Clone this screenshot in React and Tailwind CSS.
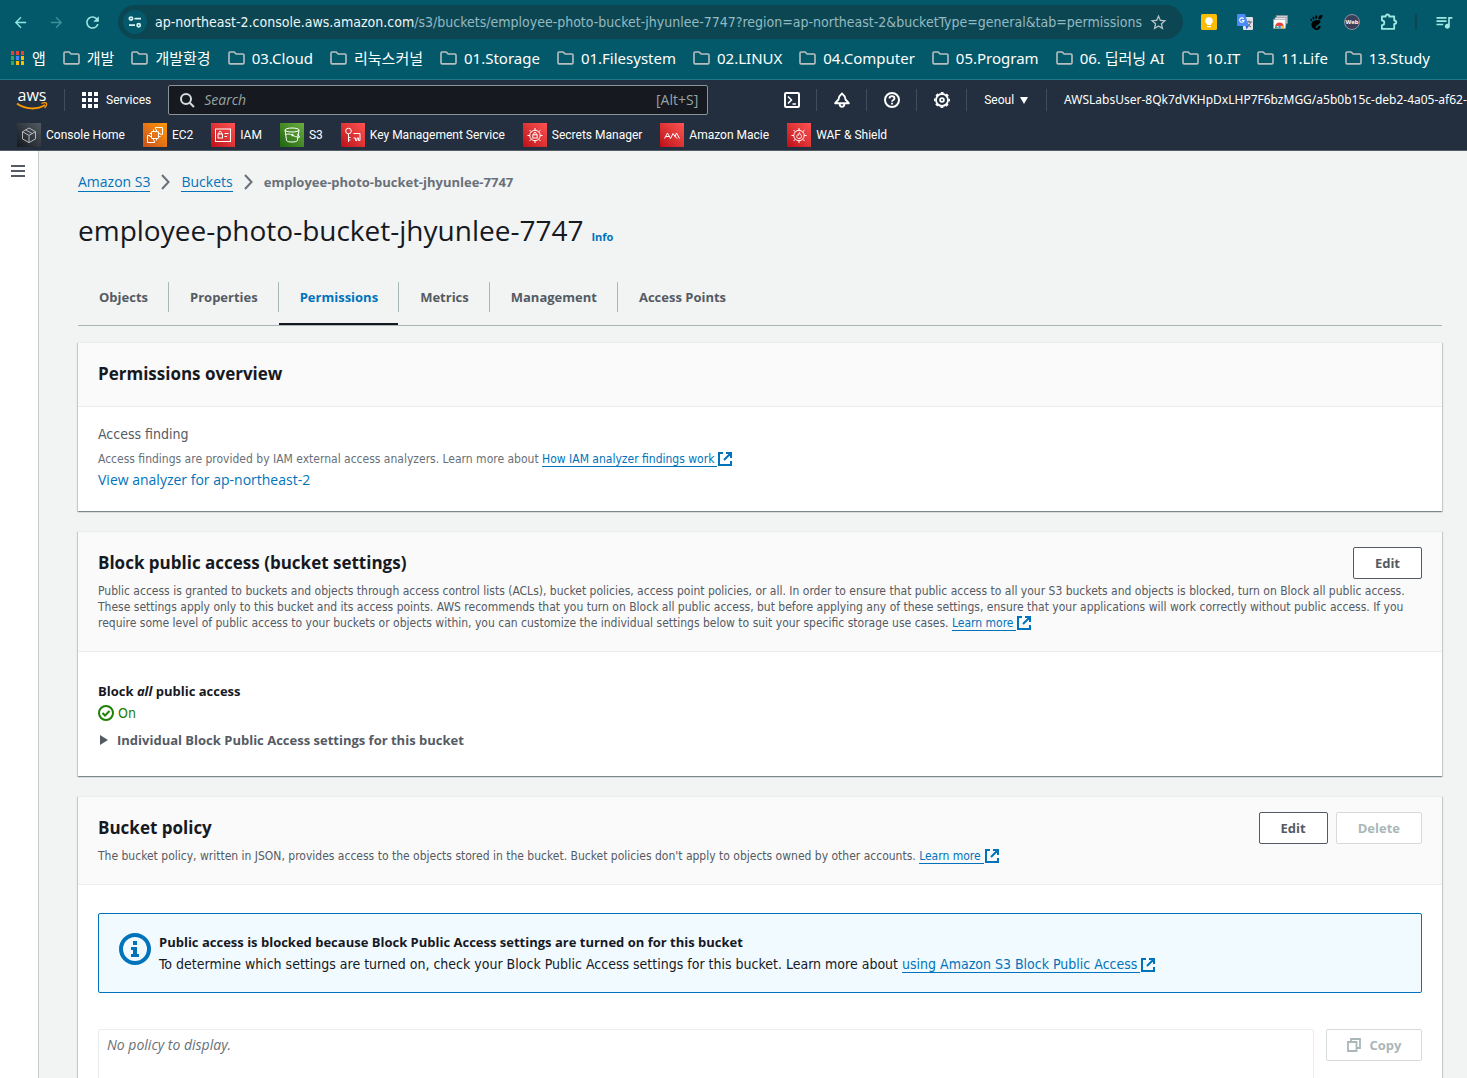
import React from 'react';
import { MdArrowBack, MdArrowForward, MdRefresh, MdStarOutline, MdQueueMusic } from 'react-icons/md';
import { SiGnome } from 'react-icons/si';

const sans = "font-['DejaVu_Sans_Condensed','Noto_Sans_CJK_KR',sans-serif]";
const navSans = "font-['Roboto',sans-serif]";
const wide = "font-['Open_Sans','Noto_Sans',sans-serif]";
const bold = "font-['Open_Sans','Noto_Sans',sans-serif] font-bold";

/* ---------- browser chrome ---------- */

const bookmarks = [
  '개발', '개발환경', '03.Cloud', '리눅스커널', '01.Storage', '01.Filesystem', '02.LINUX',
  '04.Computer', '05.Program', '06. 딥러닝 AI', '10.IT', '11.Life', '13.Study',
];

function FolderIcon() {
  return (
    <svg width="17" height="14" viewBox="0 0 17 14" className="shrink-0" fill="none" stroke="#b9bfc1" strokeWidth="1.6" strokeLinejoin="round">
      <path d="M1 2.2c0-.7.4-1.2 1.1-1.2h4.1l1.9 2h6.7c.7 0 1.2.5 1.2 1.2v7.5c0 .7-.5 1.2-1.2 1.2H2.1c-.7 0-1.1-.5-1.1-1.2z" />
    </svg>
  );
}

function AppsIcon() {
  const colors = ['#ea4335', '#ea4335', '#ea4335', '#34a853', '#4285f4', '#fbbc04', '#34a853', '#fbbc04', '#fbbc04'];
  return (
    <svg width="13" height="14" viewBox="0 0 13 14" className="shrink-0">
      {colors.map((c, i) => (
        <rect key={i} x={(i % 3) * 5} y={Math.floor(i / 3) * 5} width="3" height="4" fill={c} />
      ))}
    </svg>
  );
}

function TuneIcon() {
  return (
    <svg width="14" height="12" viewBox="0 0 14 12" fill="none" stroke="#d9f3f3" strokeWidth="1.7">
      <circle cx="3" cy="2.6" r="1.6" />
      <path d="M6.5 2.6h6.5M1 9.2h6" />
      <circle cx="10.7" cy="9.2" r="1.6" />
    </svg>
  );
}

function KeepIcon() {
  return (
    <svg width="16" height="16" viewBox="0 0 16 16">
      <rect width="16" height="16" rx="1.5" fill="#fbbc04" />
      <path d="M8 3a3.8 3.8 0 0 0-2 7v1h4v-1a3.8 3.8 0 0 0-2-7zM6 12h4v1.2H6z" fill="#fff" />
    </svg>
  );
}

function TranslateIcon() {
  return (
    <svg width="16" height="16" viewBox="0 0 16 16">
      <rect x="6" y="3" width="10" height="13" rx="1" fill="#dfe1e5" />
      <path d="M9 8h6M12 6.5V8M10 13c2-1 3-3 3.5-5M10.5 9.5c.8 1.6 2 2.7 3.5 3.5" stroke="#5f6368" strokeWidth="1" fill="none" />
      <path d="M1 0h7l3.8 12H1a1 1 0 0 1-1-1V1a1 1 0 0 1 1-1z" fill="#4c8bf5" />
      <path d="M8.5 12h3.3L9.5 15.5z" fill="#3367d6" />
      <path d="M6.6 4.7A2.2 2.2 0 1 0 7 6.5H4.9" fill="none" stroke="#fff" strokeWidth="1.1" />
    </svg>
  );
}

function CardsIcon() {
  return (
    <svg width="16" height="14" viewBox="0 0 16 14">
      <rect x="3.5" y=".5" width="11" height="8" fill="#c9ccd0" stroke="#8d9194" strokeWidth=".6" />
      <rect x="2" y="2.5" width="11" height="8" fill="#e1e3e6" stroke="#8d9194" strokeWidth=".6" />
      <rect x=".5" y="4.5" width="12" height="9" fill="#fff" stroke="#9a9da0" strokeWidth=".6" />
      <path d="M2.2 11a4.4 4.4 0 0 1 8.6 0z" fill="#ea4335" />
      <path d="M2 13.2c0-1.2.2-1.9.8-2.9L5.5 13.2z" fill="#34a853" />
      <path d="M7.5 13.2l2-2.7h1.2c.4.9.5 1.7.5 2.7z" fill="#fbbc04" />
      <circle cx="6.6" cy="11.9" r="1.4" fill="#4285f4" />
    </svg>
  );
}

function WebIcon() {
  return (
    <span className="flex size-4 items-center justify-center rounded-full border border-[#8d93a8] bg-[#3b3f58] text-[6px] font-bold leading-none text-white">
      Web
    </span>
  );
}

function PuzzleIcon() {
  return (
    <svg width="18" height="18" viewBox="0 0 18 18" fill="none" stroke="#9fe8e2" strokeWidth="1.8" strokeLinejoin="round">
      <path d="M1.9 3.5h3.8c0-2.7 3.6-2.7 3.6 0h4.9v4c2.7 0 2.7 3.4 0 3.4v5H1.9v-3.7c3.2 0 3.2-4.8 0-4.8z" />
    </svg>
  );
}

function BrowserBar() {
  return (
    <div className="shrink-0 border-b border-[#1f7888] bg-[#03596a] font-['Noto_Sans','Noto_Sans_CJK_KR',sans-serif]">
      <div className="flex h-11 items-center pl-3 pr-[13px]">
        <button aria-label="Back" className="text-[#8fe6e4]"><MdArrowBack size={17} /></button>
        <button aria-label="Forward" className="ml-[19px] text-[#3d8f99]"><MdArrowForward size={17} /></button>
        <button aria-label="Reload" className="ml-[18px] text-[#9fe8e2]"><MdRefresh size={19} /></button>
        <div className="ml-4 flex h-[34px] min-w-0 flex-1 items-center rounded-full bg-[#0d4653] pl-[5px] pr-[15px]">
          <button aria-label="Site information" className="flex size-6 shrink-0 items-center justify-center rounded-full bg-[#03596a]">
            <TuneIcon />
          </button>
          <p className="ml-2 flex-1 whitespace-nowrap font-['DejaVu_Sans_Condensed',sans-serif] text-sm text-[#93bac0]">
            <span className="text-[#eef6f7]">ap-northeast-2.console.aws.amazon.com</span>
            /s3/buckets/employee-photo-bucket-jhyunlee-7747?region=ap-northeast-2&amp;bucketType=general&amp;tab=permissions
          </p>
          <button aria-label="Bookmark" className="text-[#b9c4c6]"><MdStarOutline size={19} /></button>
        </div>
        <div className="ml-[18px] flex items-center gap-5">
          <KeepIcon />
          <TranslateIcon />
          <CardsIcon />
          <SiGnome size={15} color="#000" />
          <WebIcon />
          <PuzzleIcon />
        </div>
        <div className="ml-[17px] h-4 w-0.5 bg-[#0d4653]" />
        <button aria-label="Media" className="ml-[17px] text-[#9fe8e2]"><MdQueueMusic size={20} /></button>
      </div>
      <nav className="flex h-[35px] items-start gap-[17px] whitespace-nowrap pl-[11px] pt-[3px] text-[15px] leading-[22px] text-white">
        <a href="#apps" className="flex items-center gap-2"><AppsIcon />앱</a>
        {bookmarks.map((b) => (
          <a key={b} href="#bookmark" className="flex items-center gap-[7px]"><FolderIcon />{b}</a>
        ))}
      </nav>
    </div>
  );
}

/* ---------- console navigation ---------- */

const burst = 'M12 5v2.3M12 17.7V20M4.5 12.5h2.3M17.2 12.5h2.3M6.5 7l1.8 1.8M17.5 7l-1.8 1.8M6.5 18l1.8-1.8M17.5 18l-1.8-1.8';

const art = {
  home: (<><path d="M12 5l6.5 3.7v7.2L12 19.600l-6.500-3.700V8.700z" /><path d="M5.500 8.700L12 12.400l6.500-3.700M12 12.400v7.200M8.700 6.900l6.500 3.700" /></>),
  ec2: (<><path d="M12.500 6.500v-2h7v7h-2M7 12.500H4.500v7h7v-2" /><rect x="8.500" y="8.500" width="7" height="7" rx=".5" /><path d="M10.500 6.500v2M13.500 6.500v2M10.500 15.500v2M13.500 15.500v2M6.500 10.500h2M6.500 13.500h2M15.500 10.500h2M15.500 13.500h2" /></>),
  iam: (<><rect x="4.500" y="6" width="15" height="12.500" /><rect x="7" y="11" width="4.500" height="4" /><path d="M8 11V9.500a1.200 1.200 0 0 1 2.400 0V11M13.500 10.500h4M13.500 13.500h2.500" /></>),
  s3: (<><ellipse cx="12" cy="7" rx="7" ry="2" /><path d="M5 7l1.600 10.500c.5 2 10.300 2 10.800 0L19 7M6 11.500c2-1 4-.5 6 .5s5 2.500 7.500 2.200c.5-1-1-2-2.500-2.700" /><circle cx="12.500" cy="12" r=".8" /></>),
  kms: (<><circle cx="7.500" cy="8" r="2.800" /><path d="M7.500 11v8M7.500 14.500H9.500M7.500 17H9.500M12.500 10.500H19v7h-1.500v-2.500h-1.500v2.500h-1.500v-2.500h-2" /></>),
  secrets: (<><circle cx="12" cy="12.500" r="5.200" /><rect x="9.800" y="11.800" width="4.400" height="3.200" /><path d="M10.700 11.800v-1a1.300 1.300 0 0 1 2.600 0v1" /><path d={burst} /></>),
  macie: (<path d="M4.500 15.500l3-5.500 3 5.500 2.500-5 2 3 1.500-3.500 3 5.500M6 13.500h3M14 12l3 3.500" />),
  waf: (<><circle cx="12" cy="12.500" r="5.200" /><path d="M12 15.500c-2.500 0-2.800-2.500-1.200-4 .3 1 .8 1 1 .5.200-1-.3-1.700.7-2.500 0 1.500 2 2 2 4 0 1.300-1 2-2.500 2z" /><path d={burst} /></>),
};

const red = 'from-[#bd0816] to-[#ff5252] text-white';
const favorites = [
  ['Console Home', 'home', 'from-[#16191f] to-[#545b64] text-[#b5babf]'],
  ['EC2', 'ec2', 'from-[#c8511b] to-[#ff9900] text-white'],
  ['IAM', 'iam', red],
  ['S3', 's3', 'from-[#1b660f] to-[#6cae3e] text-white'],
  ['Key Management Service', 'kms', red],
  ['Secrets Manager', 'secrets', red],
  ['Amazon Macie', 'macie', red],
  ['WAF & Shield', 'waf', red],
];

function Divider() {
  return <div className="h-[22px] w-px shrink-0 bg-[#414d5c]" />;
}

function NavIcon({ label, children }) {
  return (
    <button aria-label={label} className="flex w-[49px] shrink-0 justify-center">
      <svg width="16" height="16" viewBox="0 0 16 16" fill="none" stroke="#fff" strokeWidth="2" strokeLinejoin="round">{children}</svg>
    </button>
  );
}

function ConsoleNav() {
  return (
    <header className={`shrink-0 border-b border-[#545b64] bg-[#232f3e] text-xs text-white ${navSans}`}>
      <div className="flex h-10 items-center overflow-hidden whitespace-nowrap pl-4">
        <a href="#home" aria-label="AWS home" className="flex w-8 shrink-0 flex-col items-center">
          <span className={`h-3 text-base font-medium leading-[11px] ${wide}`}>aws</span>
          <svg width="32" height="8" viewBox="0 0 32 8" fill="none" stroke="#ff9900">
            <path d="M1 1.5C9 7.5 21 8 29 3" strokeWidth="2" />
            <path d="M25.5 1.3c2-.6 4.6-.8 5 .1.3.9-.6 3.3-1.9 4.6" strokeWidth="1.3" />
          </svg>
        </a>
        <div className="ml-4"><Divider /></div>
        <button className="ml-[17px] flex items-center gap-2">
          <svg width="16" height="16" viewBox="0 0 16 16" fill="#fff">
            {[0, 6, 12].map((y) => [0, 6, 12].map((x) => <rect key={`${x}-${y}`} x={x} y={y} width="4" height="4" />))}
          </svg>
          Services
        </button>
        <label className="ml-[17px] flex h-[30px] w-[540px] shrink-0 items-center rounded-xs border border-[#879596] bg-[#16191f] pl-[11px] pr-[9px]">
          <svg width="15" height="15" viewBox="0 0 15 15" fill="none" stroke="#d5dbdb" strokeWidth="2">
            <circle cx="6" cy="6" r="5" /><path d="M9.7 9.7l4.3 4.3" />
          </svg>
          <input aria-label="Search" placeholder="Search" className="ml-[9px] min-w-0 flex-1 bg-transparent font-['Open_Sans',sans-serif] text-sm italic outline-none placeholder:text-[#95a5a6]" />
          <span className={`text-sm text-[#95a5a6] ${wide}`}>[Alt+S]</span>
        </label>
        <div className="ml-[59px] flex shrink-0 items-center">
          <NavIcon label="CloudShell">
            <rect x="1" y="1" width="14" height="14" rx="1" /><path d="M4 4.5L7.5 8 4 11.5M8.5 12H12" strokeWidth="1.7" />
          </NavIcon>
          <Divider />
          <NavIcon label="Notifications">
            <path d="M8 1.5C6 3 4.8 5 4.5 7.5L1.2 11.2h13.6L11.5 7.5C11.2 5 10 3 8 1.5zM5.5 11.5C5.8 16 10.2 16 10.5 11.5" strokeWidth="1.9" />
          </NavIcon>
          <Divider />
          <NavIcon label="Help">
            <circle cx="8" cy="8" r="7" />
            <path d="M5.5 6.5c0-3.2 5-3.2 5 0 0 1.6-2.5 1.6-2.5 3.3M8 10.8v1.7" strokeWidth="1.8" />
          </NavIcon>
          <Divider />
          <NavIcon label="Settings">
            <circle cx="8" cy="8" r="6" strokeWidth="1.8" />
            <circle cx="8" cy="8" r="7.2" strokeWidth="1.6" strokeDasharray="2.827 2.827" strokeDashoffset="1.4" />
            <circle cx="8" cy="8" r="1.9" strokeWidth="1.8" />
          </NavIcon>
          <Divider />
        </div>
        <button className="ml-[17px] flex items-center gap-1.5">
          Seoul
          <svg width="8" height="7" viewBox="0 0 8 7"><path d="M0 0h8L4 7z" fill="#fff" /></svg>
        </button>
        <div className="ml-[18px]"><Divider /></div>
        <button className="ml-[17px] font-['Noto_Sans',sans-serif] text-xs">AWSLabsUser-8Qk7dVKHpDxLHP7F6bzMGG/a5b0b15c-deb2-4a05-af62-</button>
      </div>
      <nav className="flex h-[30px] items-center gap-[18px] whitespace-nowrap pl-[17px]">
        {favorites.map(([name, key, colors]) => (
          <a key={name} href="#service" className="flex items-center gap-[5px]">
            <span className={`size-6 bg-linear-to-tr ${colors}`}>
              <svg width="24" height="24" viewBox="0 0 24 24" fill="none" stroke="currentColor" strokeWidth="1">{art[key]}</svg>
            </span>
            {name}
          </a>
        ))}
      </nav>
    </header>
  );
}

/* ---------- page ---------- */

function ExternalIcon() {
  return (
    <svg width="14" height="14" viewBox="0 0 14 14" className="ml-px inline-block align-[-3px]" fill="none" stroke="#0073bb" strokeWidth="2">
      <path d="M5 1H1v12h12V9M8 1h5v5M13 1L6 8" />
    </svg>
  );
}

function ExternalLink({ children }) {
  return (
    <a href="#external" className="whitespace-nowrap text-[#0073bb]">
      <span className="border-b border-[#0073bb] pr-[3px]">{children}</span>
      <ExternalIcon />
    </a>
  );
}

function Button({ children, disabled }) {
  return (
    <button
      disabled={disabled}
      className={`flex h-8 items-center rounded-xs border bg-white px-[21px] text-[13px] ${bold} ${disabled ? 'border-[#d5dbdb] text-[#aab7b8]' : 'border-[#545b64] text-[#545b64]'}`}
    >
      {children}
    </button>
  );
}

function Card({ title, actions, description, children }) {
  return (
    <section className="border-t border-[#eaeded] bg-white shadow-[0_1px_1px_0_rgba(0,28,36,0.3),1px_1px_1px_0_rgba(0,28,36,0.15),-1px_1px_1px_0_rgba(0,28,36,0.15)]">
      <div className="border-b border-[#eaeded] bg-[#fafafa] px-5 pb-4 pt-[15px]">
        <div className="flex h-8 items-center justify-between">
          <h2 className={`text-[17px] leading-8 text-[#16191f] ${bold}`}>{title}</h2>
          <div className="flex gap-2">{actions}</div>
        </div>
        {description && <p className="pb-1 pt-1 text-xs leading-4 text-[#545b64]">{description}</p>}
      </div>
      {children}
    </section>
  );
}

function Chevron() {
  return (
    <svg width="9" height="16" viewBox="0 0 9 16" fill="none" stroke="#687078" strokeWidth="2"><path d="M1 1l6.5 7L1 15" /></svg>
  );
}

const tabs = ['Objects', 'Properties', 'Permissions', 'Metrics', 'Management', 'Access Points'];

export default function App() {
  return (
    <div className={`flex h-screen flex-col overflow-hidden bg-[#f2f3f3] text-sm text-[#16191f] ${sans}`}>
      <BrowserBar />
      <ConsoleNav />
      <div className="flex min-h-0 flex-1">
        <aside className="w-[39px] shrink-0 border-r border-[#c5caca] bg-white pl-[11px] pt-[14px]">
          <button aria-label="Open navigation" className="block">
            <svg width="14" height="12" viewBox="0 0 14 12" stroke="#545b64" strokeWidth="2"><path d="M0 1h14M0 6h14M0 11h14" /></svg>
          </button>
        </aside>
        <main className="min-w-0 flex-1 overflow-hidden pl-[39px] pr-[25px] pt-[21px]">
          <nav aria-label="Breadcrumb" className={`flex h-5 items-center gap-[11px] text-sm leading-[18px] ${wide}`}>
            <a href="#s3" className="border-b border-[#0073bb] text-[#0073bb]">Amazon S3</a>
            <Chevron />
            <a href="#buckets" className="border-b border-[#0073bb] text-[#0073bb]">Buckets</a>
            <Chevron />
            <span className="text-[13px] font-bold text-[#687078]">employee-photo-bucket-jhyunlee-7747</span>
          </nav>
          <h1 className={`mt-5 flex items-baseline gap-2 text-[28px] leading-9 ${wide}`}>
            employee-photo-bucket-jhyunlee-7747
            <a href="#info" className="text-[11px] font-bold text-[#0073bb]">Info</a>
          </h1>
          <div role="tablist" className="mt-[27px] flex border-b border-[#aab7b8]">
            {tabs.map((t, i) => {
              const active = t === 'Permissions';
              return (
                <button key={t} role="tab" aria-selected={active} className={`text-[13px] ${bold} ${active ? 'text-[#0073bb]' : 'text-[#545b64]'}`}>
                  <span className={`flex h-[30px] items-center pl-[21px] pr-5 ${i < tabs.length - 1 ? 'border-r border-[#aab7b8]' : ''}`}>{t}</span>
                  <span className={`mr-px mt-[11px] block h-0.5 ${active ? 'bg-[#16191f]' : ''}`} />
                </button>
              );
            })}
          </div>

          <div className="mt-4 flex flex-col gap-5">
            <Card title="Permissions overview">
              <div className="px-5 pb-5 pt-4">
                <h3 className="leading-[22px] text-[#545b64]">Access finding</h3>
                <p className="pb-[2px] pt-1.5 text-xs leading-4 text-[#687078]">
                  Access findings are provided by IAM external access analyzers. Learn more about{' '}
                  <ExternalLink>How IAM analyzer findings work</ExternalLink>
                </p>
                <a href="#analyzer" className={`block leading-[22px] text-[#0073bb] ${wide}`}>View analyzer for ap-northeast-2</a>
              </div>
            </Card>

            <Card
              title="Block public access (bucket settings)"
              actions={<Button>Edit</Button>}
              description={
                <>
                  Public access is granted to buckets and objects through access control lists (ACLs), bucket policies, access point
                  policies, or all. In order to ensure that public access to all your S3 buckets and objects is blocked, turn on Block
                  all public access. These settings apply only to this bucket and its access points. AWS recommends that you turn on
                  Block all public access, but before applying any of these settings, ensure that your applications will work correctly
                  without public access. If you require some level of public access to your buckets or objects within, you can customize
                  the individual settings below to suit your specific storage use cases. <ExternalLink>Learn more</ExternalLink>
                </>
              }
            >
              <div className="px-5 pb-[25px] pt-7 leading-[22px]">
                <h3 className={`text-[13px] ${bold}`}>Block <em>all</em> public access</h3>
                <p className="flex items-center gap-1 text-[#1d8102]">
                  <svg width="16" height="16" viewBox="0 0 16 16" fill="none" stroke="#1d8102" strokeWidth="2">
                    <circle cx="8" cy="8" r="7" /><path d="M4.5 8l2.5 2.5 4.5-4.5" />
                  </svg>
                  On
                </p>
                <button className={`mt-[5px] flex items-center gap-[9px] pl-0.5 text-[13px] text-[#545b64] ${bold}`}>
                  <svg width="8" height="10" viewBox="0 0 8 10"><path d="M0 0l8 5-8 5z" fill="#545b64" /></svg>
                  Individual Block Public Access settings for this bucket
                </button>
              </div>
            </Card>

            <Card
              title="Bucket policy"
              actions={<><Button>Edit</Button><Button disabled>Delete</Button></>}
              description={
                <>
                  The bucket policy, written in JSON, provides access to the objects stored in the bucket. Bucket policies don't apply to
                  objects owned by other accounts. <ExternalLink>Learn more</ExternalLink>
                </>
              }
            >
              <div className="px-5 pt-7">
                <div role="status" className="flex h-20 items-start gap-2 rounded-xs border border-[#0073bb] bg-[#f1faff] px-5 pt-[17px] leading-[22px]">
                  <svg width="32" height="32" viewBox="0 0 32 32" className="mt-0.5 shrink-0">
                    <circle cx="16" cy="16" r="14" fill="none" stroke="#0073bb" strokeWidth="4" />
                    <path d="M14 8h4v4h-4zM12 14h6v7h2v3h-8v-3h2v-4h-2z" fill="#0073bb" />
                  </svg>
                  <div>
                    <p className={`text-[13px] ${bold}`}>Public access is blocked because Block Public Access settings are turned on for this bucket</p>
                    <p>
                      To determine which settings are turned on, check your Block Public Access settings for this bucket. Learn more about{' '}
                      <ExternalLink>using Amazon S3 Block Public Access</ExternalLink>
                    </p>
                  </div>
                </div>
                <div className="mt-9 flex items-start gap-3">
                  <div className={`h-60 flex-1 rounded-xs border border-[#eaeded] px-2 pt-1 text-sm italic leading-[22px] text-[#687078] ${wide}`}>
                    No policy to display.
                  </div>
                  <button disabled className={`flex h-8 w-24 items-center justify-center gap-[9px] rounded-xs border border-[#d5dbdb] bg-white text-[13px] text-[#aab7b8] ${bold}`}>
                    <svg width="14" height="14" viewBox="0 0 14 14" fill="none" stroke="#aab7b8" strokeWidth="1.8"><path d="M1 4h8.5v9H1zM4 4V1h9v9H9.5" /></svg>
                    Copy
                  </button>
                </div>
              </div>
            </Card>
          </div>
        </main>
      </div>
    </div>
  );
}
